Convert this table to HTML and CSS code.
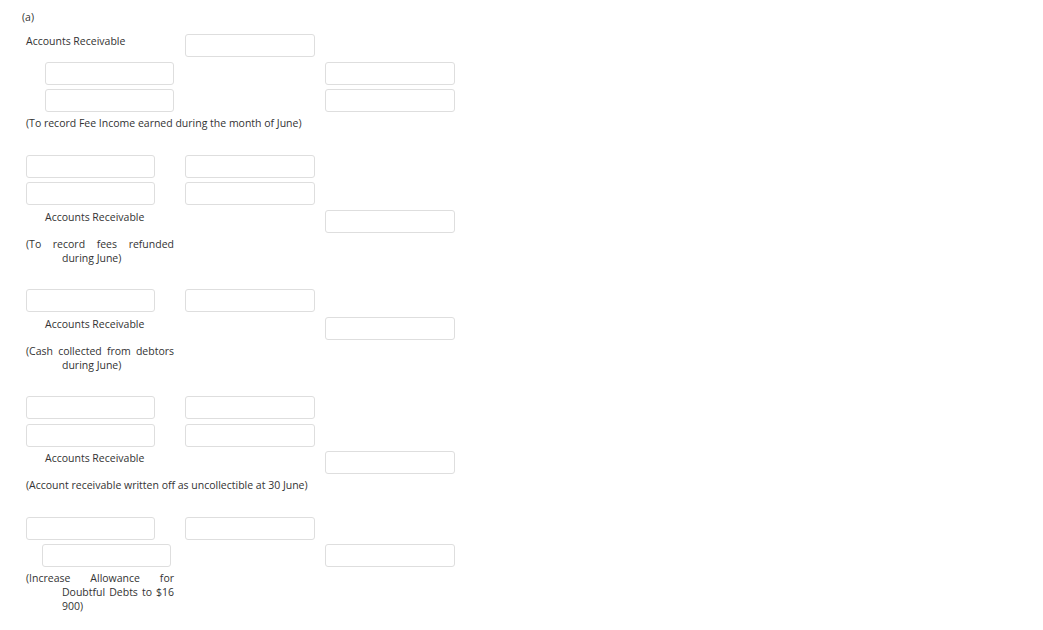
FILE: index.html
```html
<!DOCTYPE html>
<html>
<head>
<meta charset="utf-8">
<link rel="stylesheet" href="styles.css">
</head>
<body>
<div class="page">
  <div class="part">(a)</div>
  <div class="entries">
    <div class="entry">
      <div class="row">
        <div class="c1"><span class="acct">Accounts Receivable</span></div>
        <div class="c2"><input class="box" type="text"></div>
      </div>
      <div class="row">
        <div class="c1"><input class="box ind" type="text"></div>
        <div class="c2"></div>
        <div class="c3"><input class="box" type="text"></div>
      </div>
      <div class="row">
        <div class="c1"><input class="box ind" type="text"></div>
        <div class="c2"></div>
        <div class="c3"><input class="box" type="text"></div>
      </div>
      <div class="caption">(To record Fee Income earned during the month of June)</div>
    </div>

    <div class="entry">
      <div class="row">
        <div class="c1"><input class="box" type="text"></div>
        <div class="c2"><input class="box" type="text"></div>
      </div>
      <div class="row">
        <div class="c1"><input class="box" type="text"></div>
        <div class="c2"><input class="box" type="text"></div>
      </div>
      <div class="row">
        <div class="c1"><span class="acct ind">Accounts Receivable</span></div>
        <div class="c2"></div>
        <div class="c3"><input class="box" type="text"></div>
      </div>
      <div class="caption narrow">(To record fees refunded during June)</div>
    </div>

    <div class="entry">
      <div class="row">
        <div class="c1"><input class="box" type="text"></div>
        <div class="c2"><input class="box" type="text"></div>
      </div>
      <div class="row">
        <div class="c1"><span class="acct ind">Accounts Receivable</span></div>
        <div class="c2"></div>
        <div class="c3"><input class="box" type="text"></div>
      </div>
      <div class="caption narrow">(Cash collected from debtors during June)</div>
    </div>

    <div class="entry">
      <div class="row">
        <div class="c1"><input class="box" type="text"></div>
        <div class="c2"><input class="box" type="text"></div>
      </div>
      <div class="row">
        <div class="c1"><input class="box" type="text"></div>
        <div class="c2"><input class="box" type="text"></div>
      </div>
      <div class="row">
        <div class="c1"><span class="acct ind">Accounts Receivable</span></div>
        <div class="c2"></div>
        <div class="c3"><input class="box" type="text"></div>
      </div>
      <div class="caption">(Account receivable written off as uncollectible at 30 June)</div>
    </div>

    <div class="entry">
      <div class="row">
        <div class="c1"><input class="box" type="text"></div>
        <div class="c2"><input class="box" type="text"></div>
      </div>
      <div class="row">
        <div class="c1"><input class="box ind2" type="text"></div>
        <div class="c2"></div>
        <div class="c3"><input class="box" type="text"></div>
      </div>
      <div class="caption narrow">(Increase Allowance for Doubtful Debts to $16 900)</div>
    </div>
  </div>
</div>
</body>
</html>
```

FILE: styles.css
```css
html, body {
  margin: 0;
  padding: 0;
  background: #ffffff;
}

body {
  font-family: "Open Sans", "Liberation Sans", sans-serif;
  font-size: 10.5px;
  color: #333333;
}

.page {
  padding: 10px 0 0 22px;
}

.part {
  line-height: 14px;
  height: 14px;
  margin-bottom: 10px;
}

.entries {
  padding-left: 4px;
}

.entry {
  display: flex;
  flex-direction: column;
  gap: 4.5px;
  margin-bottom: 24.5px;
}

.row {
  display: flex;
  align-items: flex-start;
  height: 23px;
}

.c1 {
  width: 159px;
  flex: none;
}

.c2 {
  width: 140px;
  flex: none;
}

.c3 {
  width: 130px;
  flex: none;
}

.box {
  display: block;
  box-sizing: border-box;
  width: 129px;
  height: 23px;
  margin: 0;
  padding: 0 4px;
  border: 1px solid #dedede;
  border-radius: 3px;
  background: #ffffff;
  outline: none;
}

.box.ind {
  margin-left: 19px;
}

.box.ind2 {
  margin-left: 16px;
}

.c2 .box,
.c3 .box {
  width: 130px;
}

.acct {
  display: block;
  line-height: 14px;
  padding-top: 0;
}

.acct.ind {
  padding-left: 19px;
}

.caption {
  margin-top: -0.5px;
  line-height: 14px;
}

.caption.narrow {
  width: 112px;
  padding-left: 36px;
  text-indent: -36px;
  text-align: justify;
}
```
